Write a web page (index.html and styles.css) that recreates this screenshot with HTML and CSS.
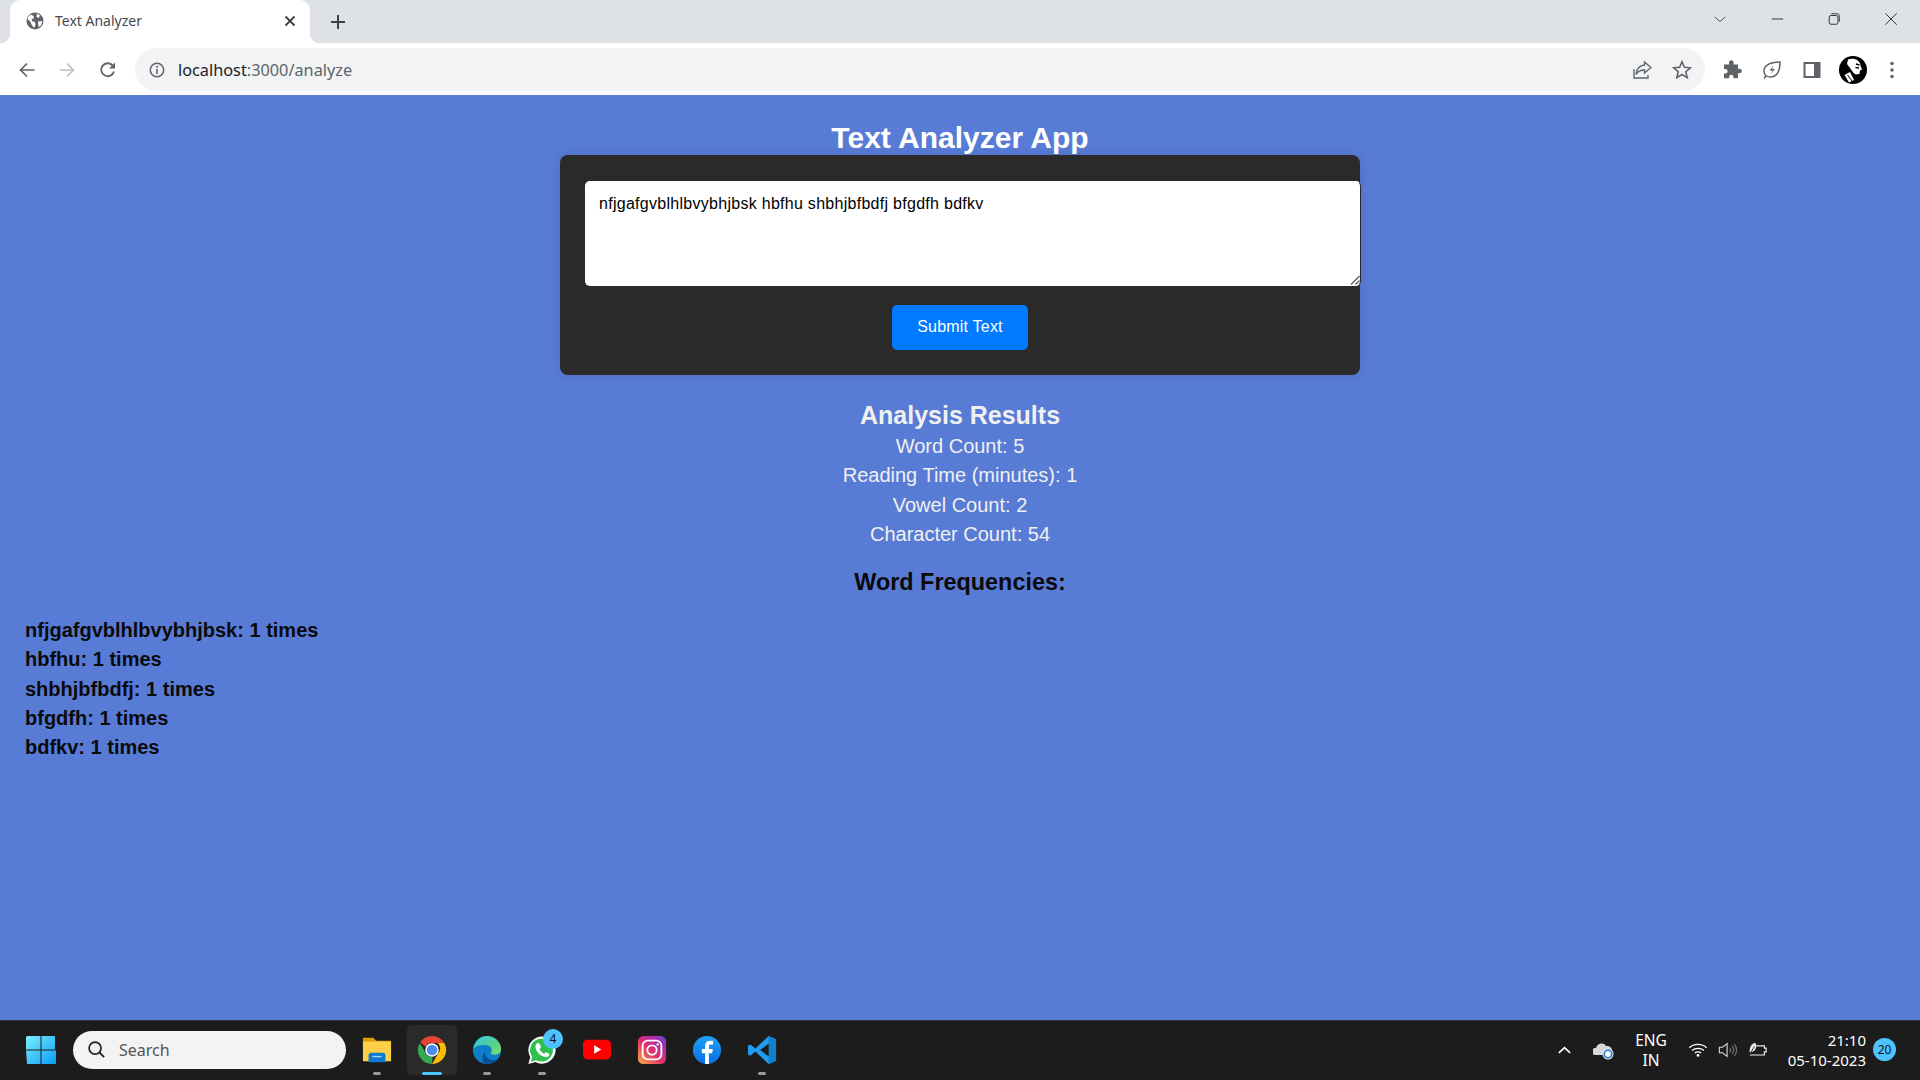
FILE: index.html
```html
<!DOCTYPE html>
<html lang="en">
<head>
    <meta charset="UTF-8">
    <title>Text Analyzer</title>
    <link rel="stylesheet" href="styles.css">
</head>
<body>
    <div class="tabstrip">
        <div class="tab">
            <svg class="favicon" viewBox="0 0 18 18"><circle cx="9" cy="9" r="8.500" fill="#5f6368"/><path d="M5 2.500 8 4.500 7.500 6.500 5.500 7 6.500 9.500 9 10 9.500 13 8 16 5.500 12.500 4 9 1.500 7.500 2 5zM11 1.500 14 3.500 12.500 6 10.500 5zM12 9.500 16.500 9 15 13.500 12.500 15z" fill="#fff"/></svg>
            <span class="tab-title">Text Analyzer</span>
            <svg class="tab-close" viewBox="0 0 12 12"><path d="M1.500 1.500 10.500 10.500M10.500 1.500 1.500 10.500" stroke="#3c4043" stroke-width="1.800" fill="none"/></svg>
        </div>
        <svg class="new-tab" viewBox="0 0 16 16"><path d="M8 1v14M1 8h14" stroke="#3c4043" stroke-width="2" fill="none"/></svg>
        <div class="window-controls">
            <svg viewBox="0 0 16 16"><path d="M2 5.500 8 11 14 5.500" stroke="#3c4043" fill="none"/></svg>
            <svg viewBox="0 0 16 16"><path d="M2 8h13" stroke="#1f1f1f" fill="none"/></svg>
            <svg viewBox="0 0 16 16"><rect x="2.500" y="4" width="10" height="10" rx="2" stroke="#1f1f1f" fill="none"/><path d="M5 2h6.500a2.500 2.500 0 0 1 2.500 2.500V11" stroke="#1f1f1f" fill="none"/></svg>
            <svg viewBox="0 0 16 16"><path d="M1.500 1.500 14.500 14.500M14.500 1.500 1.500 14.500" stroke="#1f1f1f" fill="none"/></svg>
        </div>
    </div>

    <div class="toolbar">
        <svg class="nav-icon" viewBox="0 0 18 18"><path d="M16.500 9H2.500M9 2.500 2.500 9 9 15.500" stroke="#5f6368" stroke-width="1.700" fill="none"/></svg>
        <svg class="nav-icon nav-forward" viewBox="0 0 18 18"><path d="M1.500 9H15.500M9 2.500 15.500 9 9 15.500" stroke="#bdc1c6" stroke-width="1.700" fill="none"/></svg>
        <svg class="nav-icon nav-reload" viewBox="0 0 18 18"><path d="M15 10.500A6.500 6.500 0 1 1 13.500 4.300" stroke="#5f6368" stroke-width="1.800" fill="none"/><path d="M16 1.500V7.500H10z" fill="#5f6368"/></svg>
        <div class="omnibox">
            <svg class="info-icon" viewBox="0 0 16 16"><circle cx="8" cy="8" r="6.700" stroke="#5f6368" stroke-width="1.500" fill="none"/><path d="M8 7v5" stroke="#5f6368" stroke-width="1.600"/><circle cx="8" cy="4.800" r="1" fill="#5f6368"/></svg>
            <span class="url"><span class="url-host">localhost</span>:3000/analyze</span>
            <svg class="omni-icon" viewBox="0 0 20 20"><path d="M2 9v9h14v-3" stroke="#5f6368" stroke-width="1.400" fill="none"/><path d="M12.500 2 19 7.500 12.500 13V10C9 10 6 11 4 14.500 4.500 9.500 7.500 5.500 12.500 5z" stroke="#5f6368" stroke-width="1.400" fill="none"/></svg>
            <svg class="omni-icon" viewBox="0 0 20 20"><path d="M10 1.800 12.400 7.300 18.300 7.800 13.800 11.700 15.200 17.600 10 14.500 4.800 17.600 6.200 11.700 1.700 7.800 7.600 7.300z" stroke="#5f6368" stroke-width="1.600" fill="none"/></svg>
        </div>
        <div class="extensions">
            <svg viewBox="0 0 20 20"><path d="M7 2.500a2.300 2.300 0 0 1 4.600 0V4.500h4.400v4.200h1.500a2.300 2.300 0 0 1 0 4.600H16v5H11.500v-1.300a2.200 2.200 0 0 0-4.400 0V18.300H2v-4.800h1.300a2.300 2.300 0 0 0 0-4.600H2V4.500h5z" fill="#5f6368"/></svg>
            <svg viewBox="0 0 20 20"><path d="M18 2C18 12 15 17 8 17 4 17 2 14 2 11 2 6 7 2 18 2z" stroke="#5f6368" stroke-width="1.500" fill="none"/><path d="M11.500 5.500 7.500 10.500H10.500L8.500 14 13 9H10z" fill="#5f6368"/><path d="M4.500 15 2 18.500" stroke="#5f6368" stroke-width="1.500"/></svg>
            <svg viewBox="0 0 20 20"><rect x="1.500" y="2" width="17" height="16" fill="#5f6368"/><rect x="3.500" y="4" width="8.500" height="12" fill="#fff"/></svg>
            <svg class="avatar" viewBox="0 0 28 28"><circle cx="14" cy="14" r="14" fill="#000"/><path d="M9 3.500C15 1.500 21 4 21.500 9.500L23 13.500 21 14.500 20.500 18 17 18.500 14.500 17 11 12 8 8z" fill="#fff"/><path d="M17 8 20.500 9M16.500 11.500 20 12" stroke="#000" stroke-width="1.500"/><path d="M5.500 19 11 16 15 24 10 26.500z" fill="#fff"/><path d="M8.500 19 13 25" stroke="#000"/></svg>
            <svg class="menu-dots" viewBox="0 0 6 20"><circle cx="3" cy="3.500" r="1.800" fill="#5f6368"/><circle cx="3" cy="10" r="1.800" fill="#5f6368"/><circle cx="3" cy="16.500" r="1.800" fill="#5f6368"/></svg>
        </div>
    </div>

    <main class="page">
        <h1 class="app-title">Text Analyzer App</h1>
        <form class="card">
            <div class="input-wrap">
                <textarea class="text-input" spellcheck="false">nfjgafgvblhlbvybhjbsk hbfhu shbhjbfbdfj bfgdfh bdfkv</textarea>
                <svg class="grip" viewBox="0 0 10 10"><path d="M9.500 1 1 9.500M9.500 5.500 5.500 9.500" stroke="#555" stroke-width="1.200" fill="none"/></svg>
            </div>
            <button type="button" class="submit-btn">Submit Text</button>
        </form>
        <section class="results">
            <h2>Analysis Results</h2>
            <p>Word Count: 5</p>
            <p>Reading Time (minutes): 1</p>
            <p>Vowel Count: 2</p>
            <p>Character Count: 54</p>
        </section>
        <h3 class="freq-title">Word Frequencies:</h3>
        <ul class="freq-list">
            <li>nfjgafgvblhlbvybhjbsk: 1 times</li>
            <li>hbfhu: 1 times</li>
            <li>shbhjbfbdfj: 1 times</li>
            <li>bfgdfh: 1 times</li>
            <li>bdfkv: 1 times</li>
        </ul>
    </main>

    <footer class="taskbar">
        <svg class="start" viewBox="0 0 30 30">
            <defs><linearGradient id="win" x1="0" y1="0" x2="1" y2="1"><stop offset="0" stop-color="#7ceeff"/><stop offset="1" stop-color="#0a9af5"/></linearGradient></defs>
            <path d="M1 1h13.500v13.500H0V2zM15.500 1H29v13.500H15.500zM0 15.500h14.500V29H1zM15.500 15.500H30V29H15.500z" fill="url(#win)"/>
        </svg>
        <div class="search">
            <svg viewBox="0 0 20 20"><circle cx="8.500" cy="8.500" r="6.300" stroke="#222" stroke-width="1.800" fill="none"/><path d="M13 13 18 18" stroke="#222" stroke-width="2"/></svg>
            <span>Search</span>
        </div>
        <div class="apps">
            <div class="app running">
                <svg viewBox="0 0 32 32"><path d="M1 3h11l3 3h16v4H1z" fill="#e0a100"/><path d="M1 7h30v21H1z" fill="#ffcf48"/><path d="M7 22a3 3 0 0 1 3-3h12a3 3 0 0 1 3 3v7H7z" fill="#0c7ad1"/><path d="M11 23h10" stroke="#9fd4ff" stroke-width="1.500"/></svg>
            </div>
            <div class="app active">
                <svg viewBox="0 0 32 32"><path d="M29 8.500A15 15 0 0 1 16 31l6.500-11.300a7.500 7.500 0 0 0-.5-11.200z" fill="#fbbc05"/><path d="M3 8.500 9.500 19.700A7.500 7.500 0 0 0 16 23.500h.5L16 31A15 15 0 0 1 3 8.500z" fill="#34a853"/><path d="M3.500 7.500A15 15 0 0 1 16 1a15 15 0 0 1 13 7.500H16A7.500 7.500 0 0 0 9 12.500z" fill="#ea4335"/><circle cx="16" cy="16" r="7.200" fill="#fff"/><circle cx="16" cy="16" r="5.600" fill="#4a8cf0"/></svg>
            </div>
            <div class="app running">
                <svg viewBox="0 0 32 32"><defs><linearGradient id="edge" x1="0" y1="0" x2="1" y2="1"><stop offset="0" stop-color="#3bc8e8"/><stop offset=".55" stop-color="#4fd08e"/><stop offset="1" stop-color="#80e060"/></linearGradient></defs><circle cx="16" cy="16" r="15" fill="#0c7fc8"/><path d="M1.500 15C3 6 9 1 16 1c8 0 15 6 15 14 0 4-3 6-7 6-2.500 0-4-1-4-2 2-2 1.500-7-4-8C9 10 4 11 1.500 15z" fill="url(#edge)"/><path d="M14 19c0 6 6 9 12 7l2-1c-3 4-7 6-12 6-3 0-5-2-5-6 0-3 1-6 4-8z" fill="#0a4f9c"/></svg>
            </div>
            <div class="app running">
                <svg viewBox="0 0 32 32"><path d="M1.500 31 3.500 23.500A14.500 14.500 0 1 1 9 28.800z" fill="#fff"/><path d="M4 28.500 5.500 23.200A12.200 12.200 0 1 1 9.500 26.800z" fill="#30c04f"/><path d="M11.500 8.500c-1.500.5-2.500 2-2.500 4 0 5 6 11 11.500 11 2 0 3.500-1.500 3.500-3 0-.5-3.500-2.500-4-2.200l-1.700 1.700c-2 -.5-4.300-3-5-5l1.500-1.700c.3-.5-1.500-4.800-2.300-4.800z" fill="#fff"/></svg>
                <span class="count-badge">4</span>
            </div>
            <div class="app">
                <svg viewBox="0 0 32 32"><rect x="1" y="5" width="30" height="21" rx="5" fill="#f00"/><path d="M13 11v9l7.500-4.500z" fill="#fff"/></svg>
            </div>
            <div class="app">
                <svg viewBox="0 0 32 32"><defs><linearGradient id="insta" x1="0" y1="1" x2="1" y2="0"><stop offset="0" stop-color="#fdb13b"/><stop offset=".45" stop-color="#e3306c"/><stop offset=".8" stop-color="#a32cb5"/><stop offset="1" stop-color="#5458cf"/></linearGradient></defs><rect x="1" y="1" width="30" height="30" rx="6" fill="url(#insta)"/><rect x="6" y="6" width="20" height="20" rx="5.500" stroke="#fff" stroke-width="2" fill="none"/><circle cx="16" cy="16" r="5" stroke="#fff" stroke-width="2" fill="none"/><circle cx="22" cy="10" r="1.300" fill="#fff"/></svg>
            </div>
            <div class="app">
                <svg viewBox="0 0 32 32"><defs><linearGradient id="fb" x1="0" y1="0" x2="0" y2="1"><stop offset="0" stop-color="#1ea0f5"/><stop offset="1" stop-color="#0a6fe6"/></linearGradient></defs><circle cx="16" cy="16" r="15" fill="url(#fb)"/><path d="M14 31V19.500H10.500V15H14V11.500C14 8 16 6 19.500 6H22.500V10H20C18.500 10 18 10.800 18 12V15H22.300L21.500 19.500H18V31z" fill="#fff"/></svg>
            </div>
            <div class="app running">
                <svg viewBox="0 0 32 32"><path d="M23 1 31 4.500V27.500L23 31 9 17.500 3.500 22 1 20.500V11.500L3.500 10 9 14.500zM23 9.500 14 16 23 22.500z" fill="#1f9cf0"/><path d="M23 1 31 4.500V27.500L23 31z" fill="#0f80cc"/><path d="M23 9.500V22.500L19 19.600V12.400z" fill="#1c1c1c"/></svg>
            </div>
        </div>
        <div class="tray">
            <svg class="tray-chevron" viewBox="0 0 16 10"><path d="M2 8 8 2.500 14 8" stroke="#fff" stroke-width="1.800" fill="none"/></svg>
            <svg class="tray-cloud" viewBox="0 0 22 20"><path d="M2 15a3.500 3.500 0 0 1 1-7C4 3 11 2 13 6c4-.5 6 2 6 5v4z" fill="#d8d8d8"/><circle cx="15" cy="14" r="5.500" fill="#fff"/><circle cx="15" cy="14" r="3.800" stroke="#2a7fd5" stroke-width="1.800" fill="none"/></svg>
            <div class="lang">ENG<br>IN</div>
            <svg class="tray-wifi" viewBox="0 0 22 16"><path d="M1.500 5.500C6.500.5 15.500.5 20.500 5.500M4.500 8.500C8 5.500 14 5.500 17.500 8.500M7.500 11.300C9.500 10 12.500 10 14.500 11.300" stroke="#fff" stroke-width="1.400" fill="none"/><circle cx="11" cy="14" r="1.500" fill="#fff"/></svg>
            <svg class="tray-sound" viewBox="0 0 22 18"><path d="M1.500 6H5L10 2V16L5 12H1.500z" stroke="#ddd" stroke-width="1.200" fill="none"/><path d="M13 6.500a4 4 0 0 1 0 5M15.500 4.500a7 7 0 0 1 0 9M18 2.500a10 10 0 0 1 0 13" stroke="#777" stroke-width="1.200" fill="none"/></svg>
            <svg class="tray-battery" viewBox="0 0 22 18"><path d="M9 4.500H18v2.500h2v4h-2v3.500H2" stroke="#eee" stroke-width="1.300" fill="none"/><path d="M2 12C1 6 4 2 8 1c2 4 1 8-3 10z" fill="#eee"/><path d="M2 14 7 5" stroke="#1c1c1c"/></svg>
            <div class="clock">21:10<br>05-10-2023</div>
            <span class="notify-badge">20</span>
        </div>
    </footer>
</body>
</html>
```

FILE: styles.css
```css
* {
    box-sizing: border-box;
}

html, body {
    margin: 0;
    height: 100%;
}

body {
    display: flex;
    flex-direction: column;
    height: 1080px;
    overflow: hidden;
    font-family: "Liberation Sans", Arial, sans-serif;
}

/* browser chrome */
.tabstrip {
    display: flex;
    align-items: center;
    height: 43px;
    flex-shrink: 0;
    background: #dee1e6;
}

.tab {
    position: relative;
    display: flex;
    align-items: center;
    align-self: flex-end;
    width: 300px;
    height: 43px;
    margin-left: 10px;
    padding: 0 14px 2px 16px;
    background: #fff;
    border-radius: 10px 10px 0 0;
}

.tab::before,
.tab::after {
    content: "";
    position: absolute;
    bottom: 0;
    width: 10px;
    height: 10px;
}

.tab::before {
    left: -10px;
    background: radial-gradient(circle at 0 0, #dee1e6 10px, #fff 10.5px);
}

.tab::after {
    right: -10px;
    background: radial-gradient(circle at 100% 0, #dee1e6 10px, #fff 10.5px);
}

.favicon {
    width: 18px;
    height: 18px;
    margin-right: 11px;
}

.tab-title {
    flex: 1;
    font-family: "Noto Sans", sans-serif;
    font-size: 14px;
    color: #45494d;
}

.tab-close {
    width: 12px;
    height: 12px;
}

.new-tab {
    width: 16px;
    height: 16px;
    margin-left: 20px;
    margin-top: 1px;
}

.window-controls {
    display: flex;
    align-items: center;
    gap: 43px;
    margin-left: auto;
    padding-right: 22px;
    padding-bottom: 5px;
}

.window-controls svg {
    width: 14px;
    height: 14px;
}

.toolbar {
    display: flex;
    align-items: center;
    height: 52px;
    flex-shrink: 0;
    padding: 5px 0 4px 18px;
    background: #fff;
}

.nav-icon {
    width: 18px;
    height: 18px;
    margin-right: 22px;
}

.nav-forward {
    margin-right: 23px;
}

.nav-reload {
    margin-right: 18px;
}

.omnibox {
    display: flex;
    align-items: center;
    width: 1570px;
    height: 43px;
    padding: 0 13px 0 14px;
    background: #f1f3f4;
    border-radius: 22px;
}

.info-icon {
    width: 16px;
    height: 16px;
    margin-right: 13px;
}

.url {
    flex: 1;
    font-family: "Noto Sans", sans-serif;
    font-size: 16.3px;
    color: #5f6368;
}

.url-host {
    color: #202124;
}

.omni-icon {
    width: 20px;
    height: 20px;
    margin-left: 20px;
}

.extensions {
    display: flex;
    align-items: center;
    gap: 20px;
    margin-left: 17px;
}

.extensions svg {
    width: 20px;
    height: 20px;
}

.extensions .avatar {
    width: 28px;
    height: 28px;
    margin: 0 2px 0 -3px;
}

.extensions .menu-dots {
    width: 6px;
}

/* the app itself */
.page {
    flex: 1;
    padding: 24px 25px 0;
    background: #587bd6;
}

.app-title {
    margin: 0;
    padding-top: 1px;
    font-size: 30px;
    line-height: 35px;
    font-weight: 700;
    text-align: center;
    color: #fff;
}

.card {
    display: flex;
    flex-direction: column;
    align-items: center;
    width: 800px;
    height: 220px;
    margin: 0 auto;
    padding: 26px 0 0 26px;
    background: #2a2a2a;
    border-radius: 8px;
    box-shadow: 0 0 10px rgba(0, 0, 0, 0.12);
}

.input-wrap {
    position: relative;
    flex-shrink: 0;
    width: 776px;
    height: 105px;
}

.text-input {
    display: block;
    width: 100%;
    height: 100%;
    padding: 13px;
    border: 1px solid #fff;
    border-right-color: #2a2a2a;
    border-radius: 5px;
    font-family: "Liberation Sans", Arial, sans-serif;
    font-size: 16px;
    letter-spacing: 0.28px;
    color: #000;
    background: #fff;
    outline: none;
    resize: none;
}

.grip {
    position: absolute;
    right: 1px;
    bottom: 1px;
    width: 10px;
    height: 10px;
}

.submit-btn {
    width: 136px;
    height: 45px;
    margin: 19px 0 0 -26px;
    padding: 0 0 2px;
    border: none;
    border-radius: 5px;
    font-family: "Liberation Sans", Arial, sans-serif;
    font-size: 16px;
    letter-spacing: 0.2px;
    color: #fff;
    background: #007bff;
}

.results {
    margin-top: 23px;
    text-align: center;
    color: #f0f0f0;
}

.results h2 {
    margin: 0;
    font-size: 25px;
    line-height: 34px;
}

.results p {
    margin: 0;
    font-size: 20px;
    line-height: 29.3px;
}

.freq-title {
    margin: 20px 0 0;
    font-size: 23.4px;
    text-align: center;
    color: #0a0a0a;
}

.freq-list {
    margin: 20px 0 0;
    padding: 0;
    list-style: none;
    font-size: 20px;
    font-weight: 700;
    line-height: 29.3px;
    color: #0a0a0a;
}

/* windows taskbar */
.taskbar {
    display: flex;
    align-items: center;
    height: 60px;
    flex-shrink: 0;
    padding: 0 0 2px 26px;
    background: #1c1c1c;
    border-top: 1px solid #2e3440;
}

.start {
    width: 30px;
    height: 30px;
}

.search {
    display: flex;
    align-items: center;
    width: 273px;
    height: 38px;
    margin-left: 17px;
    padding-left: 14px;
    background: #f3f3f3;
    border-radius: 19px;
    font-family: "Noto Sans", sans-serif;
    font-size: 16px;
    color: #555;
}

.search svg {
    width: 19px;
    height: 19px;
    margin-right: 13px;
}

.apps {
    display: flex;
    margin-left: 3px;
}

.app {
    position: relative;
    display: flex;
    align-items: center;
    justify-content: center;
    width: 55px;
    height: 50px;
}

.app svg {
    width: 30px;
    height: 30px;
}

.app.running::after,
.app.active::after {
    content: "";
    position: absolute;
    bottom: 0;
    left: 50%;
    width: 8px;
    height: 3px;
    margin-left: -4px;
    background: #9a9a9a;
    border-radius: 2px;
}

.app.active {
    background: #2a2a2a;
    border-radius: 5px;
    width: 50px;
    margin: 0 2.5px;
}

.app.active::after {
    width: 20px;
    margin-left: -10px;
    background: #4cc2ff;
}

.count-badge {
    position: absolute;
    top: 4px;
    right: 6px;
    width: 20px;
    height: 20px;
    font-family: "Noto Sans", sans-serif;
    font-size: 12px;
    line-height: 20px;
    text-align: center;
    color: #111;
    background: #4cc2ff;
    border-radius: 50%;
}

.tray {
    display: flex;
    align-items: center;
    margin-left: auto;
    padding-right: 24px;
    font-family: "Noto Sans", sans-serif;
    color: #fff;
}

.tray-chevron {
    width: 15px;
    height: 10px;
    margin-right: 21px;
}

.tray-cloud {
    width: 22px;
    height: 20px;
    margin-right: 18px;
}

.lang {
    width: 36px;
    margin-right: 19px;
    font-size: 15.5px;
    line-height: 20px;
    text-align: center;
}

.tray-wifi {
    width: 20px;
    height: 16px;
    margin-right: 10px;
}

.tray-sound {
    width: 20px;
    height: 18px;
    margin-right: 10px;
}

.tray-battery {
    width: 20px;
    height: 18px;
    margin-right: 8px;
}

.clock {
    width: 90px;
    font-size: 15px;
    line-height: 20px;
    text-align: right;
}

.notify-badge {
    width: 23px;
    height: 23px;
    margin-left: 7px;
    font-size: 12px;
    line-height: 23px;
    text-align: center;
    color: #111;
    background: #4cc2ff;
    border-radius: 50%;
}
```
